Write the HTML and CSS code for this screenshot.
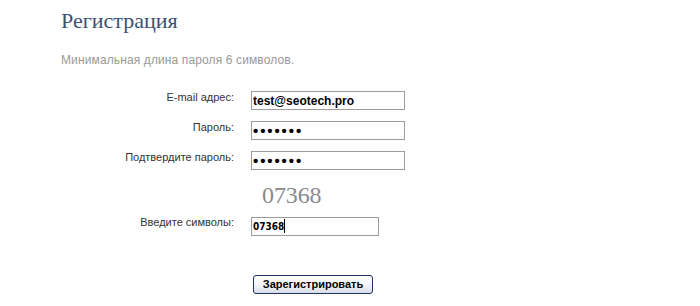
FILE: index.html
```html
<!DOCTYPE html>
<html lang="ru">
  <head>
    <meta charset="UTF-8" />
    <meta name="viewport" content="width=device-width, initial-scale=1.0" />
    <title>Регистрация</title>
    <link rel="stylesheet" href="styles.css">
  </head>
  <body>
    <section id="page">
      <h1 class="title">Регистрация</h1>
      <p class="hint">Минимальная длина пароля 6 символов.</p>
      <form class="regform" onsubmit="return false;">
        <label class="lbl" for="email">E-mail адрес:</label>
        <input class="field" id="email" type="text" value="test@seotech.pro" />

        <label class="lbl" for="pass">Пароль:</label>
        <input class="field pass" id="pass" type="password" value="1234567" />

        <label class="lbl" for="pass2">Подтвердите пароль:</label>
        <input class="field pass" id="pass2" type="password" value="1234567" />

        <div class="captcha-cell">
          <span class="captcha">07368</span>
        </div>

        <label class="lbl" for="code">Введите символы:</label>
        <span class="code-wrap">
          <input class="field code" id="code" type="text" value="07368" />
          <span class="caret"></span>
        </span>

        <div class="btn-cell">
          <input class="btn" type="submit" value="Зарегистрировать" />
        </div>
      </form>
    </section>
  </body>
</html>
```

FILE: styles.css
```css
body {
  margin: 0;
  background: #fff;
}
#page {
  padding: 8px 0 0 61px;
}
.title {
  margin: 0;
  font: normal 22px/26px "Liberation Serif", serif;
  color: #3a5374;
}
.hint {
  margin: 19px 0 0;
  font: 12px/15px "Liberation Sans", Arial, sans-serif;
  letter-spacing: 0.12px;
  color: #9a9a9a;
}
.regform {
  margin-top: 23px;
  display: grid;
  grid-template-columns: 173px 154px;
  column-gap: 17px;
  row-gap: 11px;
  align-items: start;
}
.lbl {
  text-align: right;
  font: 11px/13px "Liberation Sans", Arial, sans-serif;
  color: #333;
}
.field {
  box-sizing: border-box;
  width: 154px;
  height: 19px;
  margin: 0;
  padding: 0 1px;
  border: 1px solid #9c9c9c;
  background: #fff;
  font: bold 12px "Liberation Sans", Arial, sans-serif;
  color: #000;
  outline: none;
}
.pass {
  font-size: 15px;
  letter-spacing: 1.9px;
}
.captcha-cell {
  grid-column: 2;
  margin-top: 1px;
  margin-bottom: -3px;
  padding-left: 11px;
}
.captcha {
  font: 24px/26px "Liberation Serif", serif;
  color: #8a8a8a;
  letter-spacing: -0.1px;
}
.code-wrap {
  position: relative;
  display: block;
}
.code {
  width: 128px;
  font: bold 10px "DejaVu Sans Condensed", "Liberation Sans", sans-serif;
}
.caret {
  position: absolute;
  left: 33px;
  top: 3px;
  width: 1px;
  height: 14px;
  background: #000;
}
.btn-cell {
  grid-column: 2;
  margin-top: 27px;
  padding-left: 2px;
}
.btn {
  box-sizing: border-box;
  width: 120px;
  height: 19px;
  margin: 0;
  padding: 0;
  border: 1px solid #1d3262;
  border-radius: 3px;
  background: linear-gradient(#ffffff, #f2f4f8 55%, #d6dce8);
  font: bold 11px "Liberation Sans", Arial, sans-serif;
  color: #000;
}
```
